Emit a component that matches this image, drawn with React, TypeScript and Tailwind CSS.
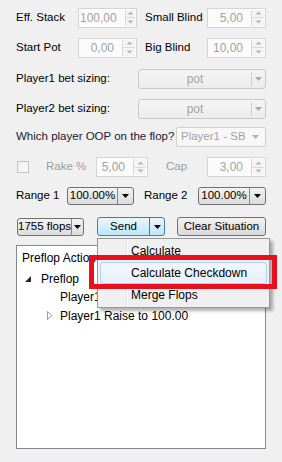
import React from "react";

const font = { fontFamily: '"Liberation Sans", Arial, sans-serif' };

function SpinArrows() {
  return (
    <div className="flex h-full w-[13px] flex-col border-l border-[#d9d9d9]">
      <div className="flex flex-1 items-center justify-center border-b border-[#d9d9d9] bg-[#f4f4f4]">
        <svg width="7" height="4" viewBox="0 0 7 4">
          <path d="M0.5 3.5 L3.5 0.5 L6.5 3.5 Z" fill="#b5b5b5" />
        </svg>
      </div>
      <div className="flex flex-1 items-center justify-center bg-[#f4f4f4]">
        <svg width="7" height="4" viewBox="0 0 7 4">
          <path d="M0.5 0.5 L3.5 3.5 L6.5 0.5 Z" fill="#b5b5b5" />
        </svg>
      </div>
    </div>
  );
}

function Spin({ value, w }: { value: string; w: string }) {
  return (
    <div className={`flex h-[20px] items-stretch border border-[#d5d5d5] bg-[#fbfbfb] p-px ${w}`}>
      <div className="flex flex-1 items-center justify-end whitespace-nowrap pr-[8px] text-[12px] text-[#a3a3a3]">
        {value}
      </div>
      <SpinArrows />
    </div>
  );
}

function Label({ children, w, grey }: { children: React.ReactNode; w: string; grey?: boolean }) {
  return (
    <div className={`shrink-0 whitespace-nowrap text-[11.5px] ${grey ? "text-[#9b9b9b]" : "text-[#000]"} ${w}`}>
      {children}
    </div>
  );
}

function DisabledCombo({ text, w }: { text: string; w: string }) {
  return (
    <div
      className={`flex h-[20px] items-stretch rounded-[3px] border border-[#c9c9c9] bg-gradient-to-b from-[#f4f4f4] to-[#ececec] ${w}`}
    >
      <div className="flex flex-1 items-center justify-center text-[12px] text-[#a3a3a3]">{text}</div>
      <div className="my-[2px] w-px bg-[#cfcfcf]" />
      <div className="flex w-[13px] items-center justify-center">
        <svg width="7" height="4" viewBox="0 0 7 4">
          <path d="M0 0 L7 0 L3.5 4 Z" fill="#a8a8a8" />
        </svg>
      </div>
    </div>
  );
}

function Combo({ text, w }: { text: string; w: string }) {
  return (
    <div
      className={`flex h-[18px] items-stretch rounded-[3px] border border-[#707070] bg-gradient-to-b from-[#f2f2f2] to-[#dcdcdc] ${w}`}
    >
      <div className="flex flex-1 items-center justify-center whitespace-nowrap text-[11.5px] text-black">{text}</div>
      <div className="w-px bg-[#8a8a8a]" />
      <div className="flex w-[15px] items-center justify-center">
        <svg width="7" height="4" viewBox="0 0 7 4">
          <path d="M0 0 L7 0 L3.5 4 Z" fill="#000" />
        </svg>
      </div>
    </div>
  );
}

export default function App() {
  return (
    <div className="relative h-[462px] w-[282px] overflow-hidden bg-[#f0f0f0] px-4 pt-2" style={font}>
      {/* Eff. stack / Small blind */}
      <div className="flex h-[19px] items-center">
        <Label w="w-[62px]">Eff. Stack</Label>
        <Spin value="100,00" w="w-[59px]" />
        <Label w="ml-[8px] w-[62px]">Small Blind</Label>
        <Spin value="5,00" w="w-[59px]" />
      </div>

      <div className="mt-[11px] flex h-[19px] items-center">
        <Label w="w-[62px]">Start Pot</Label>
        <Spin value="0,00" w="w-[59px]" />
        <Label w="ml-[8px] w-[62px]">Big Blind</Label>
        <Spin value="10,00" w="w-[59px]" />
      </div>

      <div className="mt-[12px] flex h-[19px] items-center">
        <Label w="w-[122px]">Player1 bet sizing:</Label>
        <DisabledCombo text="pot" w="w-[128px]" />
      </div>

      <div className="mt-[11px] flex h-[19px] items-center">
        <Label w="w-[122px]">Player2 bet sizing:</Label>
        <DisabledCombo text="pot" w="w-[128px]" />
      </div>

      <div className="mt-[9px] flex h-[19px] items-center">
        <Label w="w-[160px]">
          <span className="text-[#1a1a2e]">Which player OOP on the flop?</span>
        </Label>
        <div className="flex h-[20px] w-[90px] items-center rounded-[2px] border border-[#d0d0d0] bg-[#f7f7f7] pl-[4px] pr-[6px]">
          <span className="flex-1 whitespace-nowrap text-[11.5px] text-[#a3a3a3]">Player1 - SB</span>
          <svg width="7" height="4" viewBox="0 0 7 4">
            <path d="M0 0 L7 0 L3.5 4 Z" fill="#b0b0b0" />
          </svg>
        </div>
      </div>

      {/* Rake row */}
      <div className="mt-[11px] flex h-[20px] items-center">
        <div className="ml-px h-[12px] w-[12px] shrink-0 border border-[#c2c2c2] bg-gradient-to-br from-[#f0f0f0] to-[#fafafa]" />
        <Label w="ml-[17px] w-[50px]" grey>
          Rake %
        </Label>
        <Spin value="5,00" w="w-[52px]" />
        <Label w="ml-[18px] w-[41px]" grey>
          Cap
        </Label>
        <Spin value="3,00" w="w-[59px]" />
      </div>

      {/* Ranges */}
      <div className="mt-[10px] flex h-[18px] items-center">
        <Label w="w-[51px]">Range 1</Label>
        <Combo text="100.00%" w="w-[67px]" />
        <Label w="ml-[10px] w-[54px]">Range 2</Label>
        <Combo text="100.00%" w="w-[68px]" />
      </div>

      {/* Buttons */}
      <div className="mt-[12px] flex h-[19px] items-center">
        <div className="ml-px">
          <Combo text="1755 flops" w="w-[67px]" />
        </div>
        <div className="ml-[13px] flex h-[19px] w-[68px] items-stretch rounded-[3px] border border-[#3c7fb1] bg-gradient-to-b from-[#eaf6fd] to-[#bee6fd]">
          <div className="flex flex-1 items-center justify-center text-[11.5px] text-black">Send</div>
          <div className="w-px bg-[#3c7fb1]" />
          <div className="flex w-[14px] items-center justify-center">
            <svg width="7" height="4" viewBox="0 0 7 4">
              <path d="M0 0 L7 0 L3.5 4 Z" fill="#000" />
            </svg>
          </div>
        </div>
        <div className="ml-[12px] flex h-[19px] w-[89px] items-center justify-center whitespace-nowrap rounded-[3px] border border-[#707070] bg-gradient-to-b from-[#f2f2f2] to-[#d9d9d9] text-[11.5px] text-black">
          Clear Situation
        </div>
      </div>

      {/* Tree */}
      <div className="mt-[9px] h-[204px] w-[250px] border border-[#828790] bg-white text-[12px] text-black">
        <div className="flex h-[18px] items-center pl-[5px] pt-[5px]">Preflop Action</div>
        <div className="mt-[6px] flex h-[18px] items-center pl-[8px]">
          <svg width="6" height="6" viewBox="0 0 6 6" className="mr-[10px]">
            <path d="M6 0 L6 6 L0 6 Z" fill="#262626" />
          </svg>
          Preflop
        </div>
        <div className="flex h-[18px] items-center pl-[43px]">Player1 Call</div>
        <div className="flex h-[19px] items-center pl-[30px]">
          <svg width="6" height="9" viewBox="0 0 6 9" className="mr-[7px]">
            <path d="M0.5 0.5 L5 4.5 L0.5 8.5 Z" fill="none" stroke="#9a9a9a" />
          </svg>
          Player1 Raise to 100.00
        </div>
      </div>

      {/* Popup menu */}
      <div className="absolute left-[97px] top-[238px] w-[173px] border border-[#979797] bg-[#f0f0f0] py-px shadow-[3px_3px_3px_rgba(0,0,0,0.3)]">
        <div className="absolute bottom-0 left-[28px] top-0 w-px bg-[#e2e3e3]" />
        <div className="absolute bottom-0 left-[29px] top-0 w-px bg-white" />
        <div className="relative flex h-[22px] items-center pl-[33px] text-[12px] text-black">Calculate</div>
        <div className="relative mx-[2px] flex h-[22px] items-center rounded-[3px] border border-[#aecff7] bg-gradient-to-b from-[#f2f7fd] to-[#e6f0fb] pl-[30px] text-[12px] text-black">
          Calculate Checkdown
        </div>
        <div className="relative flex h-[22px] items-center pl-[33px] text-[12px] text-black">Merge Flops</div>
      </div>

      {/* Red highlight */}
      <div className="pointer-events-none absolute left-[89px] top-[255px] h-[34px] w-[188px] border-[5px] border-[#e8101c]" />
    </div>
  );
}
